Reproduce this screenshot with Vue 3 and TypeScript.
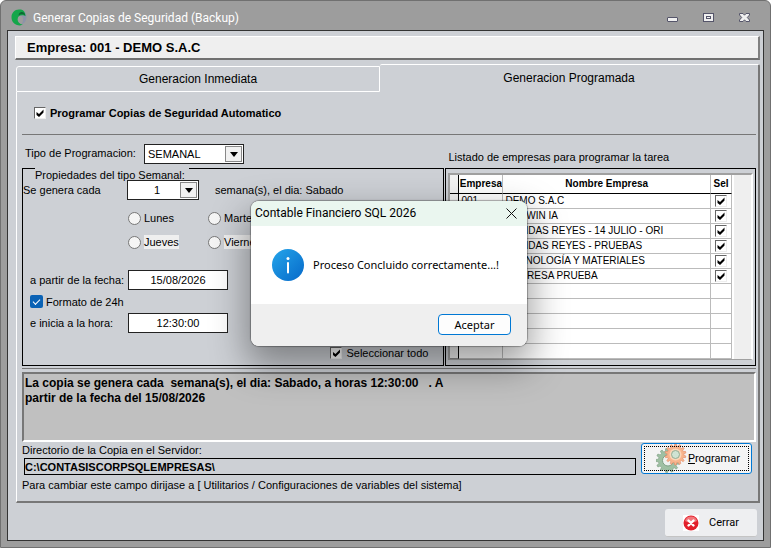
<script setup lang="ts">
import { ref } from 'vue'

interface Company {
  code: string
  name: string
  selected: boolean
}

const automatic = ref(true)
const kind = ref('SEMANAL')
const every = ref('1')
const day = ref('')
const days: string[] = ['Lunes', 'Martes', 'Jueves', 'Viernes']
const startDate = ref('15/08/2026')
const startTime = ref('12:30:00')
const use24h = ref(true)
const selectAll = ref(true)
const folder = ref('C:\\CONTASISCORPSQLEMPRESAS\\')
const summary = ref(
  'La copia se genera cada  semana(s), el dia: Sabado, a horas 12:30:00   . A\npartir de la fecha del 15/08/2026',
)
const companies = ref<Company[]>([
  { code: '001', name: 'DEMO S.A.C', selected: true },
  { code: '', name: 'DARWIN IA', selected: true },
  { code: '', name: 'TIENDAS REYES - 14 JULIO - ORI', selected: true },
  { code: '', name: 'TIENDAS REYES - PRUEBAS', selected: true },
  { code: '', name: 'TECNOLOGÍA Y MATERIALES', selected: true },
  { code: '', name: 'EMPRESA PRUEBA', selected: true },
])
const emptyRows = 5
const dialogOpen = ref(true)

// Outline of a toothed wheel centred on (cx, cy).
function gear(cx: number, cy: number, r: number, teeth: number): string {
  const pts: string[] = []
  const step = (Math.PI * 2) / teeth
  const profile: [number, number][] = [[0, 0.8], [0.22, 0.8], [0.32, 1], [0.68, 1], [0.78, 0.8]]
  for (let i = 0; i < teeth; i++) {
    for (const [t, k] of profile) {
      const a = (i + t) * step
      pts.push(`${(cx + Math.cos(a) * r * k).toFixed(2)} ${(cy + Math.sin(a) * r * k).toFixed(2)}`)
    }
  }
  return `M${pts.join('L')}Z`
}
const backGear = gear(12, 16.5, 12, 13)
const frontGear = gear(19.5, 10.5, 10.5, 14)
</script>

<template>
  <div class="window">
    <header class="titlebar">
      <svg class="logo" viewBox="0 0 16 17" aria-hidden="true">
        <path d="M9 1c4 0 6.500 3 6.500 7 0 4-2.500 7-6 8 2-2 3-4 2.500-6.500C11.500 7 9 6 7 7z" fill="#8d93a8" />
        <path d="M10 .6C4.500-.6.5 3.300.5 8.200c0 4.800 3.500 8.300 8.500 8.200 1-.1 2-.4 2.800-.9C8.500 15.200 6.500 13 6.600 10.400 6.700 7.800 8.500 6.300 11 6.300c1.500 0 2.800.4 3.500 1C14.600 4 13 1.300 10 .6z" fill="#14a64a" />
        <path d="M7.600 6.500c2-1.600 5-1.500 6.700.3C14 4.200 12 2.500 9.800 3.300 8.300 3.900 7.600 5 7.600 6.500z" fill="#0b6b33" />
      </svg>
      <h1>Generar Copias de Seguridad (Backup)</h1>
      <div class="controls">
        <button type="button" aria-label="Minimizar">
          <svg viewBox="0 0 11 11"><rect x=".5" y="5.500" width="10" height="4" rx=".5" /></svg>
        </button>
        <button type="button" aria-label="Maximizar">
          <svg viewBox="0 0 11 11"><rect x=".5" y="1.500" width="10" height="8" /><rect x="3.500" y="4.500" width="4" height="2" /></svg>
        </button>
        <button type="button" aria-label="Cerrar ventana">
          <svg viewBox="0 0 11 11"><path d="M.5 1.500h3.500l1.500 1.700 1.500-1.700h3.500v1.500L8.300 5.500l2.200 2.500v1.500H7L5.500 7.800 4 9.500H.5V8l2.200-2.500L.5 3z" /></svg>
        </button>
      </div>
    </header>

    <main class="client">
      <div class="company">Empresa: 001 - DEMO S.A.C</div>

      <div class="tabs" role="tablist">
        <button type="button" class="tab" role="tab" aria-selected="false">Generacion Inmediata</button>
        <button type="button" class="tab active" role="tab" aria-selected="true">Generacion Programada</button>
      </div>

      <section class="page">
        <label class="auto"><input v-model="automatic" type="checkbox" class="check" />Programar Copias de Seguridad Automatico</label>
        <hr class="rule" />

        <div class="columns">
          <div class="column">
            <div class="kind">
              <label for="kind">Tipo de Programacion:</label>
              <span class="combo kind-combo">
                <select id="kind" v-model="kind"><option>SEMANAL</option></select>
                <span class="drop"><svg viewBox="0 0 8 5"><path d="M0 0h8L4 5z" /></svg></span>
              </span>
            </div>
            <fieldset class="weekly">
              <legend>Propiedades del tipo Semanal:</legend>
              <div class="every">
                <label for="every">Se genera cada</label>
                <span class="combo every-combo">
                  <select id="every" v-model="every"><option>1</option></select>
                  <span class="drop"><svg viewBox="0 0 8 5"><path d="M0 0h8L4 5z" /></svg></span>
                </span>
                <span>semana(s), el dia: Sabado</span>
              </div>
              <div class="days">
                <label v-for="(d, i) in days" :key="d"><input v-model="day" type="radio" name="day" :value="d" /><span :class="{ lit: i > 1 }">{{ d }}</span></label>
              </div>
              <div class="when">
                <label for="date">a partir de la fecha:</label>
                <input id="date" v-model="startDate" type="text" />
                <label class="h24"><input v-model="use24h" type="checkbox" />Formato de 24h</label>
                <label for="time">e inicia a la hora:</label>
                <input id="time" v-model="startTime" type="text" />
              </div>
              <label class="all"><input v-model="selectAll" type="checkbox" class="check" />Seleccionar todo</label>
            </fieldset>
          </div>

          <div class="column">
            <p class="list-title">Listado de empresas para programar la tarea</p>
            <div class="list">
              <div class="grid">
                <table>
                  <thead>
                    <tr><th class="mark"></th><th class="code">Empresa</th><th>Nombre Empresa</th><th class="sel">Sel</th></tr>
                  </thead>
                  <tbody>
                    <tr v-for="c in companies" :key="c.name">
                      <td class="mark"></td>
                      <td>{{ c.code }}</td>
                      <td>{{ c.name }}</td>
                      <td class="sel"><input v-model="c.selected" type="checkbox" class="check" :aria-label="c.name" /></td>
                    </tr>
                    <tr v-for="n in emptyRows" :key="n"><td class="mark"></td><td></td><td></td><td></td></tr>
                  </tbody>
                </table>
                <div class="gutter"></div>
              </div>
            </div>
          </div>
        </div>

        <hr class="rule" />
        <textarea v-model="summary" class="summary" readonly aria-label="Resumen"></textarea>

        <div class="target">
          <div class="folder">
            <label for="folder">Directorio de la Copia en el Servidor:</label>
            <input id="folder" v-model="folder" type="text" readonly />
            <p>Para cambiar este campo dirijase a [ Utilitarios / Configuraciones de variables del sistema]</p>
          </div>
          <button type="button" class="schedule">
            <svg viewBox="0 0 31 29" aria-hidden="true">
              <path :d="backGear" fill="#9fc0a3" stroke="#7a9c80" stroke-width=".6" />
              <circle cx="12" cy="16.500" r="5.500" fill="#eef2ee" stroke="#7d9f84" />
              <path :d="frontGear" fill="#f8b48c" stroke="#e08a68" stroke-width=".6" />
              <circle cx="19.500" cy="10.500" r="6" fill="#fbd5b8" />
              <circle cx="19.500" cy="10.500" r="4" fill="#cfe3d3" stroke="#93ad93" />
            </svg>
            <span><u>P</u>rogramar</span>
          </button>
        </div>
      </section>

      <footer>
        <button type="button" class="close">
          <svg viewBox="0 0 16 16" aria-hidden="true">
            <rect width="16" height="16" fill="#fff" />
            <circle cx="8" cy="8" r="7.500" fill="#e2202b" />
            <path d="M2 6a6.300 6.300 0 0 1 12 0c-4 2-8 2-12 0z" fill="#f2767a" />
            <path d="M5.500 5.500l5 5M10.500 5.500l-5 5" stroke="#fff" stroke-width="2.400" stroke-linecap="round" />
          </svg>
          <span>Cerrar</span>
        </button>
      </footer>
    </main>

    <div v-if="dialogOpen" class="overlay">
      <div class="dialog" role="alertdialog" aria-labelledby="dialog-title">
        <div class="dialog-head">
          <h2 id="dialog-title">Contable Financiero SQL 2026</h2>
          <button type="button" aria-label="Cerrar mensaje" @click="dialogOpen = false">
            <svg viewBox="0 0 11 11"><path d="M.5.5l10 10M10.500.5l-10 10" /></svg>
          </button>
        </div>
        <div class="dialog-body">
          <svg viewBox="0 0 32 32" aria-hidden="true">
            <defs>
              <linearGradient id="info" x1="0" y1="0" x2="1" y2="1">
                <stop offset="0" stop-color="#25a5ea" /><stop offset="1" stop-color="#0669c9" />
              </linearGradient>
            </defs>
            <circle cx="16" cy="16" r="16" fill="url(#info)" />
            <circle cx="16" cy="9.500" r="1.500" fill="#fff" />
            <rect x="15" y="13" width="2" height="11.500" rx="1" fill="#fff" />
          </svg>
          <p>Proceso Concluido correctamente...!</p>
        </div>
        <div class="dialog-foot">
          <button type="button" @click="dialogOpen = false">Aceptar</button>
        </div>
      </div>
    </div>
  </div>
</template>

<style>
body {
  margin: 0;
  background: #fff;
}
</style>

<style scoped>
* {
  box-sizing: border-box;
}

.window {
  position: relative;
  display: flex;
  flex-direction: column;
  min-height: 100vh;
  padding: 0 6px 6px;
  border: 1px solid #707070;
  border-radius: 6px 6px 0 0;
  background: #9d9d9d;
  color: #000;
  font: 11px/14px 'Liberation Sans', Arial, sans-serif;
}

button,
input,
select,
textarea {
  margin: 0;
  padding: 0;
  border: 0;
  border-radius: 0;
  background: none;
  color: inherit;
  font: inherit;
}

p,
h1,
h2 {
  margin: 0;
  font: inherit;
}

svg {
  display: block;
}

.titlebar {
  display: flex;
  align-items: center;
  height: 29px;
  padding: 4px 14px 0 4px;
}

.logo {
  width: 16px;
  height: 17px;
}

.titlebar h1 {
  margin-left: 6px;
  color: #fff;
  font: 12px/16px Roboto, 'Noto Sans', sans-serif;
}

.controls {
  display: flex;
  gap: 25px;
  margin-left: auto;
}

.controls svg {
  width: 11px;
  height: 11px;
  fill: #f0f0f0;
  stroke: #55556a;
}

.client {
  flex: 1;
  display: flex;
  flex-direction: column;
  padding: 5px 3px 3px 7px;
  border: 1px solid #333;
  background: #cdd0d5;
}

.company {
  height: 24px;
  margin-bottom: 4px;
  padding-left: 11px;
  border: solid;
  border-width: 1px 2px 2px 1px;
  border-color: #fff #808080 #707070 #fff;
  background: #efefef;
  font: bold 13px/21px 'Liberation Sans', Arial, sans-serif;
}

.tabs {
  display: flex;
  align-items: flex-end;
  margin-left: 1px;
}

.tab {
  flex: 364;
  height: 26px;
  border: 1px solid #fff;
  border-radius: 3px 0 0 0;
  font-size: 12px;
}

.tab.active {
  flex: 380;
  height: 28px;
  padding-bottom: 2px;
  border-width: 1px 2px 0 0;
  border-right-color: #777;
  border-radius: 2px 2px 0 0;
}

.page {
  margin-left: 1px;
  padding: 14px 2px 9px 5px;
  border: solid;
  border-width: 0 2px 2px 1px;
  border-color: #fff #777 #777 #fff;
}

.auto {
  display: flex;
  align-items: center;
  gap: 4px;
  padding-left: 12px;
  font: bold 11px/14px 'Liberation Sans', Arial, sans-serif;
}

.check {
  appearance: none;
  width: 12px;
  height: 12px;
  border: 1px solid;
  border-color: #666 #eee #eee #666;
  background: #fff;
  flex: none;
}

.check:checked::before {
  content: '';
  display: block;
  width: 10px;
  height: 10px;
  background: #000;
  clip-path: polygon(15% 40%, 40% 60%, 85% 15%, 85% 45%, 40% 90%, 15% 70%);
}

.rule {
  height: 1px;
  margin: 14px 0 0;
  border: 0;
  background: #777;
}

.columns {
  display: grid;
  grid-template-columns: 423fr 311fr;
  gap: 1px;
  padding-top: 9px;
}

.column {
  display: flex;
  flex-direction: column;
}

.kind {
  display: flex;
  gap: 12px;
  height: 24px;
  padding-left: 3px;
}

.kind label {
  width: 107px;
  line-height: 18px;
  white-space: nowrap;
}

.combo {
  display: grid;
  height: 20px;
  border: 1px solid #222;
  background: #fff;
}

.combo select,
.combo .drop {
  grid-area: 1 / 1;
}

.combo select {
  appearance: none;
  padding: 0 20px 0 3px;
}

.drop {
  display: grid;
  place-items: center;
  place-self: center end;
  width: 17px;
  height: 16px;
  margin-right: 1px;
  border: 1px solid #888;
  background: #f1f1f1;
  pointer-events: none;
}

.drop svg {
  width: 8px;
  height: 5px;
}

.kind-combo {
  width: 100px;
}

.every-combo {
  width: 72px;
}

.every-combo select {
  padding-left: 8px;
  text-align: center;
}

.weekly,
.list {
  flex: 1;
  margin: 0;
  border: 1px solid #000;
}

.weekly {
  min-width: 0;
  padding: 0;
}

.weekly legend {
  float: left;
  height: 12px;
  margin: -1px 0 0 12px;
  padding: 0 4px 0 0;
  background: #cdd0d5;
}

.every {
  clear: both;
  display: flex;
  align-items: center;
}

.every label {
  width: 104px;
}

.every > span:last-child {
  margin-left: 16px;
}

.days {
  display: grid;
  grid-template-columns: 80px 80px;
  row-gap: 10px;
  padding: 11px 0 0 105px;
}

.days label {
  display: flex;
  align-items: center;
  gap: 3px;
}

.days input {
  appearance: none;
  width: 13px;
  height: 13px;
  border: 1px solid #777;
  border-radius: 50%;
  background: #f5f5f5;
}

.lit {
  background: #efefef;
}

.when {
  display: grid;
  grid-template-columns: 98px 100px;
  align-items: center;
  row-gap: 3px;
  padding: 21px 0 0 7px;
}

.when input[type='text'] {
  width: 100px;
  height: 20px;
  border: 1px solid #222;
  background: #fff;
  text-align: center;
}

.h24 {
  grid-column: 1 / 3;
  display: flex;
  align-items: center;
  gap: 3px;
  height: 17px;
}

.h24 input {
  appearance: none;
  width: 13px;
  height: 13px;
  border-radius: 2px;
  background: #0a62b5;
}

.h24 input:checked::before {
  content: '';
  display: block;
  width: 6px;
  height: 3px;
  margin: 4px 3px;
  border: solid #fff;
  border-width: 0 0 1px 1px;
  transform: rotate(-45deg);
}

.all {
  display: flex;
  align-items: center;
  justify-content: flex-end;
  gap: 4px;
  padding: 13px 15px 4px 0;
}

.list-title {
  height: 24px;
  padding: 6px 0 0 3px;
}

.list {
  padding: 4px 2px 5px;
}

.grid {
  display: flex;
  border: solid;
  border-width: 2px 2px 1px;
  border-color: #a0a0a0 #fff #a0a0a0 #a0a0a0;
  background: #fff;
}

table {
  flex: 1;
  border-collapse: separate;
  border-spacing: 0;
  table-layout: fixed;
  font-size: 10px;
  line-height: 14px;
}

th,
td {
  height: 15px;
  padding: 0 0 0 2px;
  border: solid #bbb;
  border-width: 0 1px 1px 0;
  overflow: hidden;
  white-space: nowrap;
}

th {
  height: 19px;
  padding: 0;
  border-bottom-color: #000;
}

.mark {
  width: 9px;
  border-right-color: #000;
  background: #f2f2f2;
}

td.mark {
  border-bottom-color: #888;
}

.code {
  width: 44px;
}

.sel {
  width: 21px;
  padding: 0;
  text-align: center;
}

.sel .check {
  display: block;
  margin: 0 auto;
}

.gutter {
  width: 17px;
  margin-left: 2px;
  background: #efefef;
}

.columns + .rule {
  margin-top: 2px;
}

.summary {
  display: block;
  width: 100%;
  height: 70px;
  margin-top: 3px;
  padding: 2px 1px;
  border: solid;
  border-width: 2px;
  border-color: #777 #fff #fff #777;
  background: #c0c0c0;
  font: bold 12px/15px 'Liberation Sans', Arial, sans-serif;
  resize: none;
  overflow: hidden;
}

.target {
  display: flex;
  justify-content: space-between;
  gap: 5px;
  padding: 1px 4px 0 0;
}

.folder {
  flex: 1;
}

.folder label {
  display: block;
}

.folder input {
  display: block;
  width: calc(100% - 2px);
  height: 17px;
  margin: 1px 0 3px 2px;
  border: 1px solid #000;
  font-weight: bold;
}

.schedule {
  display: flex;
  align-items: center;
  width: 111px;
  height: 31px;
  padding-left: 14px;
  border: 1px solid #0078d4;
  border-radius: 3px;
  outline: 1px dotted #000;
  outline-offset: -4px;
  background: #f4f4f4;
  font: 11px/14px Roboto, 'Liberation Sans', sans-serif;
}

.schedule svg {
  width: 31px;
  height: 29px;
  margin-right: 1px;
}

footer {
  display: flex;
  justify-content: flex-end;
  margin-top: auto;
  padding-right: 3px;
}

.close {
  display: flex;
  align-items: center;
  gap: 10px;
  width: 92px;
  height: 28px;
  padding-left: 18px;
  border-bottom: 1px solid #c4c4c4;
  border-radius: 3px;
  background: #eeeff1;
  font: 11px/14px Roboto, 'Liberation Sans', sans-serif;
}

.close svg {
  width: 16px;
  height: 16px;
}

.overlay {
  position: absolute;
  inset: 0;
  display: grid;
  place-items: center;
  padding: 0 0 2px 7px;
}

.dialog {
  width: 276px;
  border-radius: 8px;
  overflow: hidden;
  background: #fff;
  box-shadow: 0 0 1px 1px rgb(0 0 0 / 30%), 0 16px 36px 4px rgb(0 0 0 / 38%);
}

.dialog-head {
  display: flex;
  align-items: center;
  justify-content: space-between;
  height: 25px;
  padding: 0 10px 0 4px;
  background: #eaf6ef;
}

.dialog-head h2 {
  font: 12px/16px Roboto, 'Noto Sans', sans-serif;
}

.dialog-head svg {
  width: 11px;
  height: 11px;
  stroke: #111;
}

.dialog-body {
  display: flex;
  align-items: center;
  gap: 9px;
  height: 78px;
  padding-left: 21px;
}

.dialog-body svg {
  width: 32px;
  height: 32px;
}

.dialog-body p {
  font: 11px/16px 'Noto Sans', 'Open Sans', sans-serif;
}

.dialog-foot {
  display: flex;
  align-items: center;
  justify-content: flex-end;
  height: 42px;
  padding-right: 16px;
  background: #efefef;
}

.dialog-foot button {
  width: 73px;
  height: 21px;
  border: 1px solid #0078d4;
  border-radius: 4px;
  background: #fdfdfd;
  font: 11px/16px 'Noto Sans', 'Open Sans', sans-serif;
}
</style>
